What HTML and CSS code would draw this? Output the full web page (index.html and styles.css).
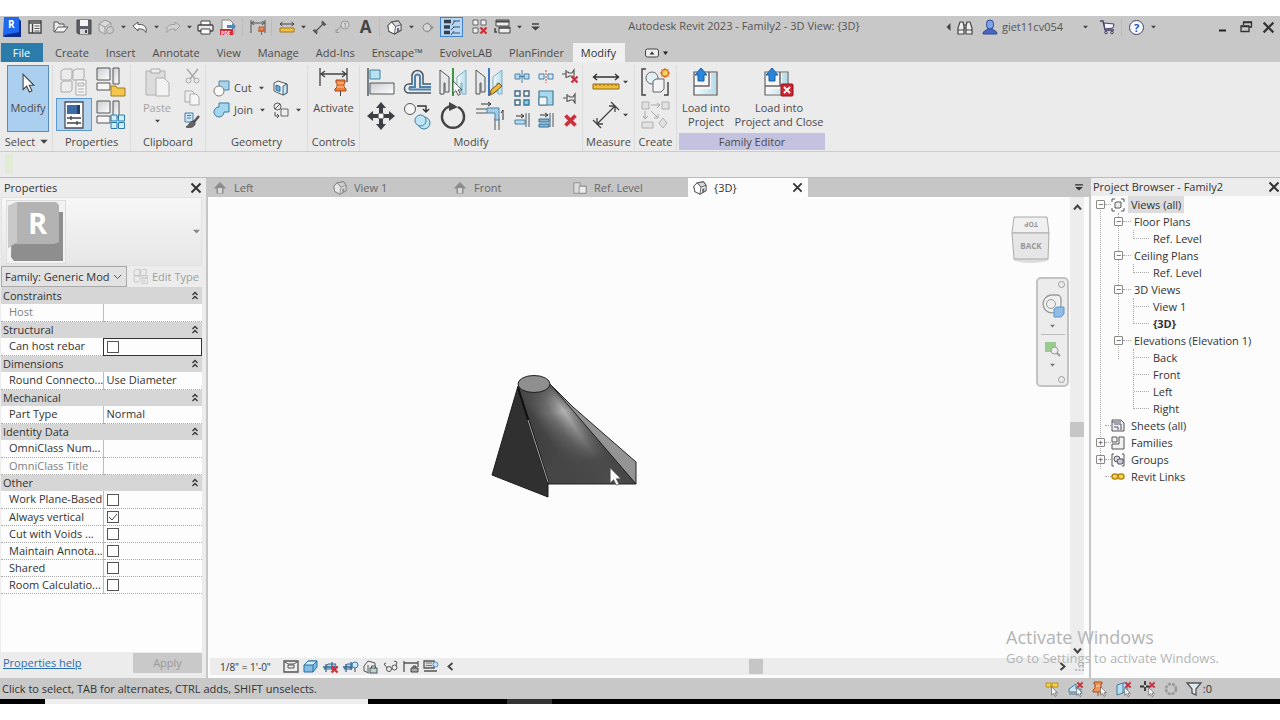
FILE: index.html
```html
<!DOCTYPE html>
<html lang="en">
<head>
<meta charset="utf-8">
<title>Autodesk Revit 2023 - Family2 - 3D View: {3D}</title>
<link rel="stylesheet" href="styles.css">
</head>
<body>
<svg class="defs" aria-hidden="true">
  <defs>
    <linearGradient id="gMetal" x1="0" y1="0" x2="1" y2="1"><stop offset="0" stop-color="#c9ccd2"/><stop offset="1" stop-color="#fff"/></linearGradient>
    <linearGradient id="gPale" x1="0" y1="0" x2="1" y2="0"><stop offset="0" stop-color="#f6fbfd"/><stop offset="1" stop-color="#b5dcea"/></linearGradient>
    <symbol id="caret" viewBox="0 0 6 4"><path d="M0 .5h6L3 3.8z" fill="#444"/></symbol>
    <symbol id="cross" viewBox="0 0 12 12"><path d="M1.500 1.500l9 9M10.500 1.500l-9 9" stroke="#333" stroke-width="2" fill="none"/></symbol>
    <symbol id="pointer" viewBox="0 0 12 18"><path d="M1 1v14l3.300-3 2.500 5.300 2.400-1.200-2.500-5H11z" fill="#fff" stroke="#444"/></symbol>
    <symbol id="house3d" viewBox="0 0 16 16"><path d="M1 6l4-4 7-1 3 4v6l-7 4-6-3z" fill="#f3f3f5" stroke="#555" stroke-width="1.200"/><path d="M1 6l4-4 4 5-1 8-6-3z" fill="#fff" stroke="#555"/><path d="M5 2l7-1 3 4-6 2z" fill="#d5d8de" stroke="#555"/><path d="M10.500 9l2.500-1v4l-2.500 1.500z" fill="#667"/></symbol>
    <symbol id="home" viewBox="0 0 14 14"><path d="M7 1L.5 7.500h3V12.500h7V7.500h3z" fill="#8d8d8d"/><rect x="5" y="7" width="4" height="5" fill="#d8d8d8"/></symbol>
    <symbol id="pane" viewBox="0 0 28 28"><path d="M1 1h13v12H1z" fill="url(#gMetal)" stroke="#555"/><path d="M17 1h6v16h-6z" fill="url(#gMetal)" stroke="#555"/><path d="M1 16h13v7H1z" fill="#f5f5f5" stroke="#555"/></symbol>
    <symbol id="types" viewBox="0 0 30 28"><g fill="#ececec" stroke="#aaa"><path d="M2 3l3-2h8v9l-2 2H2zM14 3l3-2h8v9l-2 2h-9zM2 15l3-2h8v9l-2 2H2z"/><path d="M17 12h10v15H17z" fill="#f7f7f7"/><path d="M19 15h6v3h-6zM19 21h6M19 24h6"/></g></symbol>
    <symbol id="pin" viewBox="0 0 14 12"><path d="M0 6h4M4 2v8M4 4h2l1 1h3l2-3v9l-2-3H7L6 9H4" fill="none" stroke="#555" stroke-width="1.200"/></symbol>
    <symbol id="x" viewBox="0 0 12 12"><path d="M2 2l8 8M10 2l-8 8" stroke="#c9323d" stroke-width="3" fill="none"/></symbol>
    <symbol id="chev2" viewBox="0 0 8 9"><path d="M1.500 4L4 1.500 6.500 4M1.500 8L4 5.500 6.500 8" fill="none" stroke="#333" stroke-width="1.300"/></symbol>
  </defs>
</svg>

<div class="app">
<header class="titlebar">
  <div class="qat">
    <button class="cell" aria-label="Revit"><svg width="20" height="22" viewBox="0 0 20 22"><path d="M2 1h15v20H1z" fill="#1a57d8"/><path d="M17 3l2 2v16H3l-1-3 15-2z" fill="#0b2f91"/><path d="M2 1h15v15L2 19z" fill="#1d6af0"/><text x="6" y="12" class="logo-r">R</text></svg></button>
    <button class="cell cell-wide" aria-label="Home"><svg width="14" height="14" viewBox="0 0 14 14"><path d="M1 1h12v12H1z" fill="#f4f4f4" stroke="#444" stroke-width="1.400"/><path d="M1 3h12M4.500 4v9" stroke="#444" stroke-width="1.500"/><path d="M6.500 6h5M6.500 8.500h5M6.500 11h5" stroke="#555"/></svg></button>
    <button class="cell" aria-label="Open"><svg width="16" height="14" viewBox="0 0 16 14"><path d="M1 12V2h4l1 2h5v3" fill="#eee" stroke="#555"/><path d="M1.500 12L5 7h10l-4 5z" fill="#f6f6f6" stroke="#555"/></svg></button>
    <button class="cell" aria-label="Save"><svg width="16" height="16" viewBox="0 0 16 16"><path d="M1 1h14v14H2.500L1 13.500z" fill="#5b5e66" stroke="#444"/><path d="M4 1h8v6H4z" fill="#f4f4f4"/><path d="M4 10h8v5H4z" fill="#d7d7d7"/><path d="M9 11h2v3H9z" fill="#444"/></svg></button>
    <button class="cell" aria-label="Synchronize" disabled><svg width="17" height="16" viewBox="0 0 17 16"><path d="M1 5l6-4 6 3v7l-6 4-6-3z" fill="#dadada" stroke="#999"/><path d="M1 5l6 3 6-4M7 8v7" fill="none" stroke="#999"/><circle cx="12" cy="11" r="3.500" fill="#ccc" stroke="#999"/></svg></button>
    <button class="drop" aria-label="Synchronize menu"><svg width="5" height="4"><use href="#caret"/></svg></button>
    <button class="cell" aria-label="Undo"><svg width="16" height="13" viewBox="0 0 16 13"><path d="M1 5l5-4v2.500c6-.5 9 2 8 8-1.500-3-4-4-8-3.500V10z" fill="#fafafa" stroke="#555"/></svg></button>
    <button class="drop" aria-label="Undo menu"><svg width="5" height="4"><use href="#caret"/></svg></button>
    <button class="cell" aria-label="Redo" disabled><svg width="16" height="13" viewBox="0 0 16 13"><path d="M15 5l-5-4v2.500c-6-.5-9 2-8 8 1.500-3 4-4 8-3.500V10z" fill="#d2d2d2" stroke="#a0a0a0"/></svg></button>
    <button class="drop" aria-label="Redo menu"><svg width="5" height="4"><use href="#caret"/></svg></button>
    <button class="cell" aria-label="Print"><svg width="17" height="15" viewBox="0 0 17 15"><path d="M4 5V1h9v4" fill="#fff" stroke="#444"/><rect x="1" y="5" width="15" height="6" rx="1" fill="#e9e9ee" stroke="#444" stroke-width="1.300"/><path d="M4 9h9v5H4z" fill="#fff" stroke="#444"/></svg></button>
    <button class="cell" aria-label="Export PDF"><svg width="17" height="17" viewBox="0 0 17 17"><path d="M2 1h8l4 4v10H2z" fill="#f5f5f5" stroke="#888"/><path d="M7 6h5V4l4 3.500-4 3.500V9H7z" fill="#4d86c6"/><rect y="10" width="13" height="6" fill="#d42c34"/><text x="1" y="15.500" class="pdf">PDF</text></svg></button>
    <span class="rule"></span>
    <button class="cell" aria-label="Aligned dimension"><svg width="16" height="16" viewBox="0 0 16 16"><path d="M1 1v13M15 1v13M1 4h14M4 2L1.500 4 4 6M12 2l2.500 2L12 6" fill="none" stroke="#555"/><path d="M9 8h5v4H9zM11.500 12v4M8 12h7" stroke="#c0582b" fill="#ec8b50"/></svg></button>
    <span class="rule"></span>
    <button class="cell" aria-label="Measure"><svg width="16" height="12" viewBox="0 0 16 12"><path d="M1 3h14M3.500 1L1 3l2.500 2M12.500 1L15 3l-2.500 2" fill="none" stroke="#444"/><path d="M1 7h14v4H1z" fill="#f2bf3e" stroke="#a77a1b"/></svg></button>
    <button class="drop" aria-label="Measure menu"><svg width="5" height="4"><use href="#caret"/></svg></button>
    <button class="cell" aria-label="Dimension"><svg width="15" height="15" viewBox="0 0 15 15"><path d="M3 12L12 3M1 10l4 4M10 1l4 4M3 9v3h3M9 3h3v3" fill="none" stroke="#555" stroke-width="1.200"/></svg></button>
    <button class="cell" aria-label="Tag" disabled><svg width="15" height="14" viewBox="0 0 15 14"><circle cx="10" cy="5" r="4" fill="#d8d8d8" stroke="#999"/><path d="M9 4l1.300-1v5M6 6L1 12M1 9v3.500h3" fill="none" stroke="#999"/></svg></button>
    <button class="cell glyph-a" aria-label="Text">A</button>
    <span class="rule"></span>
    <button class="cell" aria-label="Default 3D view"><svg width="15" height="15"><use href="#house3d"/></svg></button>
    <button class="drop" aria-label="3D view menu"><svg width="5" height="4"><use href="#caret"/></svg></button>
    <button class="cell" aria-label="Section"><svg width="14" height="13" viewBox="0 0 14 13"><path d="M1 6.500L6 2v9zM6 1l7 5.500L6 12" fill="#999"/><circle cx="6" cy="6.500" r="4" fill="#d5d5d5" stroke="#8b8b8b"/></svg></button>
    <button class="cell thin-on" aria-label="Thin lines" aria-pressed="true"><svg width="16" height="16" viewBox="0 0 16 16"><path d="M0 2.500h7M0 8h6M0 13.500h6" stroke="#34404e" stroke-width="3.500"/><path d="M9 2h7M9 8h7M9 14h7M8 6l3-4M7 11l3-3M7 16l3-4" stroke="#34506e" fill="none"/></svg></button>
    <button class="cell" aria-label="Close inactive views"><svg width="16" height="16" viewBox="0 0 16 16"><path d="M1 1h5v5H1zM9 1h5v5H9zM1 9h5v5H1z" fill="#f1f1f1" stroke="#666"/><svg x="7" y="7" width="9" height="9"><use href="#x"/></svg></svg></button>
    <button class="cell" aria-label="Switch windows"><svg width="17" height="16" viewBox="0 0 17 16"><path d="M2 1h13v6H2z" fill="#eee" stroke="#444"/><path d="M2 2.500h13" stroke="#444" stroke-width="2"/><path d="M5 8h11v6H5z" fill="#eee" stroke="#444"/><path d="M5 9h11M1 9v4h2" stroke="#444" stroke-width="1.500" fill="none"/></svg></button>
    <button class="drop" aria-label="Switch windows menu"><svg width="5" height="4"><use href="#caret"/></svg></button>
    <button class="cell" aria-label="Customize toolbar"><svg width="9" height="8" viewBox="0 0 9 8"><path d="M1 1h7" stroke="#444" stroke-width="1.500"/><path d="M0 3.500h9L4.500 7.500z" fill="#444"/></svg></button>
  </div>
  <h1 class="doc-title">Autodesk Revit 2023 - Family2 - 3D View: {3D}</h1>
  <div class="account">
    <button class="drop" aria-label="Collapse"><svg width="5" height="8" viewBox="0 0 5 8"><path d="M4.500 0v8L.5 4z" fill="#444"/></svg></button>
    <button class="cell" aria-label="Search"><svg width="16" height="15" viewBox="0 0 16 15"><path d="M3 2h3l1 4v8H1V8zM13 2h-3L9 6v8h6V8z" fill="#eee" stroke="#444" stroke-width="1.200"/><path d="M7 5h2M7 8h2M1 10h6M9 10h6" stroke="#444"/></svg></button>
    <button class="user"><svg width="16" height="16" viewBox="0 0 16 16"><path d="M1 15c0-3 3-4 5-4.500V9h4v1.500c2 .5 5 1.500 5 4.500z" fill="#4768c0" stroke="#2f4790"/><rect x="4.500" y="1" width="7" height="9" rx="3.500" fill="#7ea3ea" stroke="#2f4790"/></svg><span>giet11cv054</span><svg class="user-caret" width="5" height="4"><use href="#caret"/></svg></button>
    <button class="cell" aria-label="App store"><svg width="17" height="15" viewBox="0 0 17 15"><path d="M1 1h3l2 9h9" fill="none" stroke="#47426a" stroke-width="1.300"/><path d="M5 3l10 1-1 4-8 1z" fill="#f5f5ff" stroke="#47426a"/><circle cx="7" cy="12.500" r="1.300" fill="none" stroke="#47426a"/><circle cx="13" cy="12.500" r="1.300" fill="none" stroke="#47426a"/></svg></button>
    <span class="rule"></span>
    <button class="cell help" aria-label="Help"><span>?</span></button>
    <button class="drop" aria-label="Help menu"><svg width="5" height="4"><use href="#caret"/></svg></button>
  </div>
  <div class="window-controls">
    <button class="cell" aria-label="Minimize"><svg width="10" height="12" viewBox="0 0 10 12"><path d="M1 9.500h7" stroke="#222" stroke-width="2"/></svg></button>
    <button class="cell" aria-label="Restore"><svg width="12" height="12" viewBox="0 0 12 12"><path d="M3.500 4V1h8v5H9M1 5h8v5.500H1z" fill="none" stroke="#333" stroke-width="1.300"/><path d="M1 5.500h8M3.500 1.500h8" stroke="#333" stroke-width="1.500"/></svg></button>
    <button class="cell" aria-label="Close"><svg width="13" height="13"><use href="#cross"/></svg></button>
  </div>
</header>

<nav class="tabs" aria-label="Ribbon tabs">
  <button class="tab file">File</button>
  <button class="tab">Create</button>
  <button class="tab">Insert</button>
  <button class="tab">Annotate</button>
  <button class="tab">View</button>
  <button class="tab">Manage</button>
  <button class="tab">Add-Ins</button>
  <button class="tab">Enscape™</button>
  <button class="tab">EvolveLAB</button>
  <button class="tab">PlanFinder</button>
  <button class="tab current">Modify</button>
  <button class="minimize" aria-label="Minimize ribbon"><svg width="24" height="10" viewBox="0 0 24 10"><rect x=".5" y="1" width="13" height="8" rx="2" fill="#eee" stroke="#444"/><path d="M4.500 6.500h5L7 3.500z" fill="#333"/><path d="M18 3.500h5L20.500 7z" fill="#222"/></svg></button>
</nav>

<div class="ribbon">
  <section class="panel p-select">
    <div class="tools"><button class="modify"><svg width="13" height="20"><use href="#pointer"/></svg><span>Modify</span></button></div>
    <h2>Select <svg width="8" height="5"><use href="#caret"/></svg></h2>
  </section>
  <section class="panel p-props">
    <div class="tools tiles two">
      <button class="tile" aria-label="Type properties" disabled><svg width="30" height="28"><use href="#types"/></svg></button>
      <button class="tile" aria-label="Family category"><svg width="30" height="30" viewBox="0 0 30 30"><svg width="28" height="28"><use href="#pane"/></svg><path d="M15 19h5l1 2h8v8H15z" fill="#f4c74b" stroke="#a07d22"/></svg></button>
      <button class="tile on" aria-label="Properties" aria-pressed="true"><svg width="20" height="28" viewBox="0 0 20 28"><path d="M1 1h18v26H1z" fill="#fafcff" stroke="#4a4f58" stroke-width="1.300"/><path d="M3 4h10v9H3z" fill="#3f6ba5"/><path d="M13 4h3v9h-3z" fill="#26405e"/><path d="M3 17h14M3 22h14M7 15v4M13 20v4" stroke="#444" stroke-width="1.300"/></svg></button>
      <button class="tile" aria-label="Family types"><svg width="30" height="30" viewBox="0 0 30 30"><svg width="28" height="28"><use href="#pane"/></svg><path d="M15 15h6v6h-6zM22.500 15h6v6h-6zM15 22.500h6v6h-6zM22.500 22.500h6v6h-6z" fill="#cdeefc" stroke="#2d7aa8"/></svg></button>
    </div>
    <h2>Properties</h2>
  </section>
  <section class="panel p-clip">
    <div class="tools row">
      <button class="paste" disabled><svg width="26" height="30" viewBox="0 0 26 30"><path d="M2 4h19v24H2z" fill="#dcdcdc" stroke="#b0b0b0"/><path d="M7 2h9v4H7z" fill="#eee" stroke="#aaa"/><path d="M12 11h8l5 5v13H12z" fill="#f2f2f2" stroke="#b0b0b0"/></svg><span>Paste</span><svg width="5" height="4"><use href="#caret"/></svg></button>
      <div class="stack">
        <button aria-label="Cut to clipboard" disabled><svg width="15" height="16" viewBox="0 0 15 16"><path d="M2 1l8 10M13 1L5 11" stroke="#aaa" stroke-width="1.500"/><circle cx="3.500" cy="12.500" r="2.500" fill="none" stroke="#aaa"/><circle cx="11.500" cy="12.500" r="2.500" fill="none" stroke="#aaa"/></svg></button>
        <button aria-label="Copy to clipboard" disabled><svg width="16" height="16" viewBox="0 0 16 16"><path d="M1 1h7l2 2v9H1z" fill="#eee" stroke="#aaa"/><path d="M6 4h6l3 3v8H6z" fill="#f6f6f6" stroke="#aaa"/></svg></button>
        <button aria-label="Match type"><svg width="16" height="16" viewBox="0 0 16 16"><path d="M1 1h8v9H1z" fill="#cde6f3" stroke="#4b7ea5"/><path d="M3 3.500h4M3 6h4" stroke="#4b7ea5"/><path d="M15 4l-5 6" stroke="#555" stroke-width="2.500"/><path d="M10 9c-5 0-4 4-8 6 5 1 9 0 9-4z" fill="#666" stroke="#444"/></svg></button>
      </div>
    </div>
    <h2>Clipboard</h2>
  </section>
  <section class="panel p-geo">
    <div class="tools geo">
      <button><svg width="17" height="17" viewBox="0 0 17 17"><path d="M6 1h10v9H6z" fill="#a9d3e8" stroke="#4e86a8"/><circle cx="6" cy="11" r="5" fill="#fff" stroke="#8c7474"/></svg>Cut <svg class="gap-caret" width="5" height="4"><use href="#caret"/></svg></button>
      <button aria-label="Cope"><svg width="15" height="16" viewBox="0 0 15 16"><path d="M1 3l4-2 9 3v9l-4 2-9-4z" fill="#f4f6f8" stroke="#555"/><path d="M10 6l4-2v9l-4 2z" fill="#cfe6f2" stroke="#41617a"/><path d="M3 5l4 1.500v5L3 10z" fill="#6aa9d8" stroke="#2c6b9c"/></svg></button>
      <button><svg width="17" height="17" viewBox="0 0 17 17"><path d="M6 1h10v9h-5a5 5 0 1 1-5-5z" fill="#a6d6ee" stroke="#347ea6"/></svg>Join <svg class="gap-caret" width="5" height="4"><use href="#caret"/></svg></button>
      <button aria-label="Split face"><svg width="16" height="16" viewBox="0 0 16 16"><circle cx="4.500" cy="4.500" r="3.500" fill="#eee" stroke="#555"/><path d="M8 7h7v7H8z" fill="#eee" stroke="#666"/><path d="M2 7l5-5M2 10v4h4M4 12l2 2-2 2" fill="none" stroke="#555"/></svg><svg class="gap-caret" width="5" height="4"><use href="#caret"/></svg></button>
    </div>
    <h2>Geometry</h2>
  </section>
  <section class="panel p-ctl">
    <div class="tools"><button class="large"><svg width="30" height="30" viewBox="0 0 30 30"><path d="M1 1v18M28 1v14M1 7h27M6 4L2 7l4 3M23 4l4 3-4 3" fill="none" stroke="#444" stroke-width="1.300"/><path d="M17 13h9v3h-1v4l2 2v2H16v-2l2-2v-4h-1z" fill="#ef7d35" stroke="#a64c19"/><path d="M18 16h7M18 20h7" stroke="#f9d0b0"/><path d="M21.500 24v5" stroke="#444"/></svg><span>Activate</span></button></div>
    <h2>Controls</h2>
  </section>
  <section class="panel p-mod">
    <div class="tools row">
      <div class="tiles four">
        <button class="tile" aria-label="Align"><svg width="28" height="28" viewBox="0 0 28 28"><path d="M1 0v28" stroke="#4c5a66" stroke-width="1.500"/><path d="M3 2h10v9H3z" fill="#b8e2f2" stroke="#3f81a2"/><path d="M3 15h24v11H3z" fill="url(#gMetal)" stroke="#555"/></svg></button>
        <button class="tile" aria-label="Offset"><svg width="29" height="26" viewBox="0 0 29 26"><path d="M28 24H6a4.500 4.500 0 0 1 0-9h3V7a5.500 5.500 0 0 1 11 0v8h8" fill="none" stroke="#4b5560" stroke-width="1.500"/><path d="M28 20.500H7a1.500 1.500 0 0 1 0-2.500h5V8a2.500 2.500 0 0 1 5 0v10h11" fill="none" stroke="#4a82b3" stroke-width="2"/></svg></button>
        <button class="tile" aria-label="Mirror pick axis"><svg width="28" height="29" viewBox="0 0 28 29"><path d="M1 2l9 7v15H6v-9H5v11H1z" fill="#e5e7ea" stroke="#555"/><path d="M27 2l-9 7v15h4v-9h1v11h4z" fill="url(#gPale)" stroke="#7aaec5"/><path d="M14 0v28" stroke="#3b9a42" stroke-width="2"/><svg x="13" y="12" width="11" height="16"><use href="#pointer"/></svg></svg></button>
        <button class="tile" aria-label="Mirror draw axis"><svg width="28" height="29" viewBox="0 0 28 29"><path d="M1 2l9 7v15H6v-9H5v11H1z" fill="#e5e7ea" stroke="#555"/><path d="M27 2l-9 7v15h4v-9h1v11h4z" fill="url(#gPale)" stroke="#7aaec5"/><path d="M14 0v28" stroke="#3c78bd" stroke-width="2"/><path d="M15 27l1-5 8-7 3 3-8 7z" fill="#f0bc3e" stroke="#6b5325"/></svg></button>
        <button class="tile" aria-label="Move"><svg width="28" height="28" viewBox="0 0 28 28"><path d="M14 0l5 6h-3v5h-4V6H9zM14 28l5-6h-3v-5h-4v5H9zM0 14l6-5v3h5v4H6v3zM28 14l-6-5v3h-5v4h5v3z" fill="#3c4046"/><rect x="11.500" y="11.500" width="5" height="5" fill="#fff" stroke="#888"/></svg></button>
        <button class="tile" aria-label="Copy"><svg width="28" height="28" viewBox="0 0 28 28"><circle cx="7" cy="7" r="5.500" fill="#f5f5f5" stroke="#555"/><path d="M14 4h9v5M20 7l3 3 3-3" fill="none" stroke="#333" stroke-width="1.400"/><circle cx="21" cy="21" r="6" fill="#bfe5f4" stroke="#377da5"/><circle cx="17.500" cy="18.500" r="5.500" fill="#bfe5f4" stroke="#377da5"/></svg></button>
        <button class="tile" aria-label="Rotate"><svg width="28" height="28" viewBox="0 0 28 28"><path d="M19 5A11 11 0 1 1 9 5a11 11 0 0 1 6-1" fill="none" stroke="#444" stroke-width="2.500"/><path d="M10 0l9 5-9 4z" fill="#444"/></svg></button>
        <button class="tile" aria-label="Trim"><svg width="29" height="28" viewBox="0 0 29 28"><path d="M1 7h14M1 11h11M20 16v12M24 16v12" stroke="#555"/><path d="M12 6h12v12h-4v-7h-8z" fill="#a5cce4" stroke="#4b87ad"/><path d="M6 2h10M13 0l3 2-3 2M28 18V8M26 11l2-3" fill="none" stroke="#333"/></svg></button>
      </div>
      <div class="minis">
        <button aria-label="Split element"><svg width="16" height="14" viewBox="0 0 16 14"><path d="M1 5h5v5H1zM10 5h5v5h-5z" fill="#b8dbef" stroke="#4a7fa5"/><path d="M8 1v13M5 7.500h6" stroke="#4a7fa5"/></svg></button>
        <button aria-label="Split with gap"><svg width="16" height="14" viewBox="0 0 16 14"><path d="M1 5h5v5H1zM10 5h5v5h-5z" fill="#d4e9f4" stroke="#4a7fa5"/><path d="M8 1v13" stroke="#b55" stroke-dasharray="2 1"/></svg></button>
        <button aria-label="Unpin"><svg width="17" height="16" viewBox="0 0 17 16"><svg width="14" height="12"><use href="#pin"/></svg><svg x="8" y="7" width="9" height="9"><use href="#x"/></svg></svg></button>
        <button aria-label="Array"><svg width="16" height="16" viewBox="0 0 16 16"><path d="M1 1h5v5H1zM10 1h5v5h-5zM1 10h5v5H1z" fill="#eef6fa" stroke="#47677f" stroke-width="1.400"/><path d="M10 10h5v5h-5z" fill="#8ecae8" stroke="#387ba0" stroke-width="1.400"/></svg></button>
        <button aria-label="Scale"><svg width="16" height="16" viewBox="0 0 16 16"><path d="M1 1h14v14H1z" fill="#a8d8ee" stroke="#487b98" stroke-width="1.200"/><path d="M1 7h8v8H1z" fill="#f5f5f5" stroke="#487b98"/></svg></button>
        <button aria-label="Pin"><svg width="14" height="12"><use href="#pin"/></svg></button>
        <button aria-label="Trim single"><svg width="16" height="16" viewBox="0 0 16 16"><path d="M12 1v14M15 1v14" stroke="#4d5a66"/><path d="M1 8h10v4H1z" fill="#b8dbef" stroke="#4a7fa5"/><path d="M2 4h8M7 2l3 2-3 2" fill="none" stroke="#333"/></svg></button>
        <button aria-label="Trim multiple"><svg width="16" height="16" viewBox="0 0 16 16"><path d="M12 1v14M15 1v14" stroke="#4d5a66"/><path d="M1 7h10v3H1zM1 12h10v3H1z" fill="#7bb8dc" stroke="#3a6f96"/><path d="M2 3h8M7 1l3 2-3 2" fill="none" stroke="#333"/></svg></button>
        <button aria-label="Delete"><svg width="15" height="15"><use href="#x"/></svg></button>
      </div>
    </div>
    <h2>Modify</h2>
  </section>
  <section class="panel p-meas">
    <div class="tools meas">
      <button aria-label="Measure between"><svg width="28" height="18" viewBox="0 0 28 18"><path d="M1 4h26M5 1L1.500 4 5 7M23 1l3.500 3L23 7" fill="none" stroke="#333" stroke-width="1.400"/><path d="M1 11h26v5H1z" fill="#f2bd37" stroke="#8d6a1d"/><path d="M4 11v2M8 11v2M12 11v2M16 11v2M20 11v2M24 11v2" stroke="#8d6a1d"/></svg><svg class="gap-caret" width="5" height="4"><use href="#caret"/></svg></button>
      <button aria-label="Aligned dimension"><svg width="28" height="28" viewBox="0 0 28 28"><path d="M5 23L23 5M1 19l8 8M19 1l8 8M5 17v6h6M17 5h6v6" fill="none" stroke="#444" stroke-width="1.300"/></svg><svg class="gap-caret" width="5" height="4"><use href="#caret"/></svg></button>
    </div>
    <h2>Measure</h2>
  </section>
  <section class="panel p-create">
    <div class="tools tiles one">
      <button class="tile" aria-label="Create group"><svg width="29" height="28" viewBox="0 0 29 28"><path d="M5 1H1v26h4M23 27h4V14" fill="none" stroke="#444" stroke-width="1.400"/><circle cx="11" cy="10" r="6" fill="#e2eff5" stroke="#666"/><path d="M12 13l3-2h8v10l-3 3h-8z" fill="#f2f2f5" stroke="#666"/><circle cx="24" cy="5" r="3.500" fill="#f7c64a" stroke="#dd6b23" stroke-width="1.500"/><path d="M24 0v10M19 5h10M20.500 1.500l7 7M27.500 1.500l-7 7" stroke="#dd6b23"/><circle cx="24" cy="5" r="2.500" fill="#f9d562"/></svg></button>
      <button class="tile" aria-label="Create similar" disabled><svg width="29" height="28" viewBox="0 0 29 28"><path d="M1 1h7v7H1zM21 1h7v7h-7zM1 21h11v6H1zM22 17l4 5-4 5-4-5z" fill="#e2e2e2" stroke="#b0b0b0"/><path d="M10 4h9M16 2l3 2-3 3M4 10v8M2 15l2 3 3-3M10 10l7 7M17 13v4h-4" fill="none" stroke="#aaa"/></svg></button>
    </div>
    <h2>Create</h2>
  </section>
  <section class="panel p-family">
    <div class="tools row">
      <button class="large load"><svg width="30" height="30" viewBox="0 0 30 30"><path d="M3 5h23v23H3z" fill="#f6f6f7" stroke="#555" stroke-width="1.200"/><path d="M18 5v14H3" fill="none" stroke="#666" stroke-width="1.500"/><path d="M20 6h5v21H4v-5h16z" fill="url(#gPale)"/><path d="M10 1l6 7h-3v6H7V8H4z" fill="#2a86dc" stroke="#1b5e9c"/></svg><span>Load into<br>Project</span></button>
      <button class="large load-close"><svg width="30" height="30" viewBox="0 0 30 30"><path d="M1 5h23v23H1z" fill="#f6f6f7" stroke="#666" stroke-width="1.200"/><path d="M16 5v14H1" fill="none" stroke="#666" stroke-width="1.500"/><path d="M18 6h5v21H2v-5h16z" fill="url(#gPale)"/><path d="M8 1l6 7h-3v6H5V8H2z" fill="#2a86dc" stroke="#1b5e9c"/><rect x="17" y="17" width="12" height="12" rx="1" fill="#d12631" stroke="#8a1118"/><path d="M20 20l6 6M26 20l-6 6" stroke="#fff" stroke-width="1.800"/></svg><span>Load into<br>Project and Close</span></button>
    </div>
    <h2>Family Editor</h2>
  </section>
</div>
<div class="options"><span></span></div>

<main class="workspace">
  <aside class="properties">
    <div class="pane-head"><h2>Properties</h2><button aria-label="Close properties"><svg width="12" height="12"><use href="#cross"/></svg></button></div>
    <div class="preview">
      <svg width="60" height="64" viewBox="0 0 60 64"><rect x=".5" y=".5" width="59" height="63" fill="#f2f2f2" stroke="#ddd"/><path d="M6 12h51v49H8l-3-4z" fill="#8e8e8e"/><path d="M2 6l9-4h39l3 3v37l-5 2H9l-7 4z" fill="#b3b3b3"/><path d="M2 6l9-4v40l-9 5z" fill="#c9c9c9"/><text x="22" y="34" class="big-r">R</text></svg>
      <svg width="7" height="5"><use href="#caret"/></svg>
    </div>
    <div class="type-row">
      <select aria-label="Family type"><option>Family: Generic Models</option></select>
      <button class="edit-type" disabled><svg width="16" height="15"><use href="#types"/></svg>Edit Type</button>
    </div>
    <div class="prop-scroll">
    <table class="props">
      <colgroup><col class="c-name"><col></colgroup>
      <tr class="group"><th colspan="2"><span>Constraints<svg width="8" height="9"><use href="#chev2"/></svg></span></th></tr>
      <tr class="dim"><th>Host</th><td></td></tr>
      <tr class="group"><th colspan="2"><span>Structural<svg width="8" height="9"><use href="#chev2"/></svg></span></th></tr>
      <tr class="active"><th><label for="rebar">Can host rebar</label></th><td><input type="checkbox" id="rebar"></td></tr>
      <tr class="group"><th colspan="2"><span>Dimensions<svg width="8" height="9"><use href="#chev2"/></svg></span></th></tr>
      <tr><th>Round Connecto...</th><td>Use Diameter</td></tr>
      <tr class="group"><th colspan="2"><span>Mechanical<svg width="8" height="9"><use href="#chev2"/></svg></span></th></tr>
      <tr><th>Part Type</th><td>Normal</td></tr>
      <tr class="group"><th colspan="2"><span>Identity Data<svg width="8" height="9"><use href="#chev2"/></svg></span></th></tr>
      <tr><th>OmniClass Num...</th><td></td></tr>
      <tr class="dim"><th>OmniClass Title</th><td></td></tr>
      <tr class="group"><th colspan="2"><span>Other<svg width="8" height="9"><use href="#chev2"/></svg></span></th></tr>
      <tr><th><label for="wpb">Work Plane-Based</label></th><td><input type="checkbox" id="wpb"></td></tr>
      <tr><th><label for="av">Always vertical</label></th><td><input type="checkbox" id="av" checked></td></tr>
      <tr><th><label for="cv">Cut with Voids ...</label></th><td><input type="checkbox" id="cv"></td></tr>
      <tr><th><label for="ma">Maintain Annota...</label></th><td><input type="checkbox" id="ma"></td></tr>
      <tr><th><label for="sh">Shared</label></th><td><input type="checkbox" id="sh"></td></tr>
      <tr><th><label for="rc">Room Calculatio...</label></th><td><input type="checkbox" id="rc"></td></tr>
    </table>
    </div>
    <div class="prop-foot"><a href="#help">Properties help</a><button disabled>Apply</button></div>
  </aside>

  <section class="view">
    <div class="view-tabs">
      <button class="vtab"><svg width="14" height="14"><use href="#home"/></svg><span>Left</span></button>
      <button class="vtab"><svg class="faded" width="14" height="14"><use href="#house3d"/></svg><span>View 1</span></button>
      <button class="vtab"><svg width="14" height="14"><use href="#home"/></svg><span>Front</span></button>
      <button class="vtab"><svg width="14" height="14" viewBox="0 0 16 14"><path d="M1 1h7v4h7v8H1z" fill="#ddd" stroke="#888"/><path d="M7 5h8v8H7z" fill="#ececec" stroke="#888"/></svg><span>Ref. Level</span></button>
      <button class="vtab current"><svg width="14" height="14"><use href="#house3d"/></svg><span>{3D}</span><svg class="vclose" width="11" height="11"><use href="#cross"/></svg></button>
      <button class="vmenu" aria-label="View list"><svg width="8" height="7" viewBox="0 0 9 8"><path d="M0 1h9" stroke="#333" stroke-width="1.500"/><path d="M0 3.500h9L4.500 7.500z" fill="#333"/></svg></button>
    </div>
    <div class="stage">
      <div class="canvas">
        <svg class="model" width="152" height="130" viewBox="0 0 152 130" role="img" aria-label="Blend form">
          <defs><linearGradient id="gCone" gradientUnits="userSpaceOnUse" x1="34" y1="76" x2="104" y2="30"><stop offset="0" stop-color="#303030"/><stop offset=".3" stop-color="#444"/><stop offset=".5" stop-color="#777"/><stop offset=".64" stop-color="#b5b5b5"/><stop offset=".8" stop-color="#5a5a5a"/><stop offset="1" stop-color="#2e2e2e"/></linearGradient>
          <linearGradient id="gFade" gradientUnits="userSpaceOnUse" x1="58" y1="12" x2="74" y2="108"><stop offset="0" stop-color="#444" stop-opacity=".9"/><stop offset=".3" stop-color="#444" stop-opacity="0"/><stop offset=".85" stop-color="#464646" stop-opacity=".95"/></linearGradient></defs>
          <path d="M62 14l21 21 63 55v22L104 70z" fill="#949494" stroke="#222"/>
          <path d="M28 14l32-2 86 100H58z" fill="url(#gCone)"/><path d="M28 14l32-2 86 100H58z" fill="url(#gFade)"/>
          <path d="M60 12l86 100H58" fill="none" stroke="#222"/>
          <path d="M28 14L2 103l56 22V108z" fill="#303030" stroke="#1c1c1c"/>
          <path d="M28 16l30 94" stroke="#111" stroke-width="2"/><path d="M38 48l20 62" stroke="#aaa"/>
          <ellipse cx="44" cy="12" rx="16" ry="8.500" fill="#8f8f8f" stroke="#222"/>
        </svg>
        <svg class="cursor" width="13" height="19" viewBox="0 0 12 18"><path d="M1 1v14l3.300-3 2.500 5.300 2.400-1.200-2.500-5H11z" fill="#fff" stroke="#555" stroke-width=".6"/></svg>
        <svg class="cube" width="44" height="52" viewBox="0 0 44 52"><ellipse cx="22" cy="44" rx="18" ry="4" fill="#ddd"/><path d="M5 2h33l2 16H3z" fill="#f0f0f0" stroke="#aaa"/><path d="M3 18h37l-1 26H5z" fill="#e6e6e6" stroke="#aaa"/><text x="22" y="34" text-anchor="middle" class="cube-t">BACK</text><text x="-22" y="-7" transform="rotate(180)" text-anchor="middle" class="cube-t small">TOP</text></svg>
        <div class="navbar">
          <span class="dot"></span>
          <button aria-label="Steering wheel"><svg width="24" height="24" viewBox="0 0 24 24"><path d="M10 1h6a4 4 0 0 1 4 4v6a9 9 0 1 1-10-10z" fill="#f0f0f0" stroke="#999" stroke-width="1.300"/><circle cx="10" cy="10" r="4.500" fill="#eee" stroke="#999"/><path d="M13 15l3-2h7v7l-3 3h-7z" fill="#8fbde8" stroke="#5f97c9"/></svg></button>
          <svg width="5" height="4"><use href="#caret"/></svg>
          <hr>
          <button aria-label="Zoom"><svg width="16" height="16" viewBox="0 0 16 16"><path d="M0 1h11v10H0z" fill="#9acb8e"/><circle cx="9.500" cy="9.500" r="3.500" fill="#eee" stroke="#999"/><path d="M12 12l3 3" stroke="#999" stroke-width="2"/></svg></button>
          <svg width="5" height="4"><use href="#caret"/></svg>
          <span class="dot last"></span>
        </div>
      </div>
      <div class="vscroll">
        <svg width="9" height="7" viewBox="0 0 9 7"><path d="M1 5.500l3.500-4 3.500 4" fill="none" stroke="#444" stroke-width="2"/></svg>
        <span class="thumb"></span>
        <svg width="9" height="7" viewBox="0 0 9 7"><path d="M1 1.500l3.500 4 3.500-4" fill="none" stroke="#444" stroke-width="2"/></svg>
      </div>
    </div>
    <div class="view-bar">
      <button class="scale">1/8" = 1'-0"</button>
      <button aria-label="Detail level"><svg width="16" height="13" viewBox="0 0 16 13"><path d="M1 1h14v11H1z" fill="#eee" stroke="#555" stroke-width="1.300"/><path d="M2 2l3 2h6l3-2M5 5h6v3H5z" fill="none" stroke="#555"/></svg></button>
      <button aria-label="Visual style"><svg width="15" height="13" viewBox="0 0 15 13"><path d="M1 5l4-4h9v6l-4 5H1z" fill="#7dbfe8" stroke="#2f6f9e"/><path d="M1 5l4-4h9l-4 4z" fill="#d3ecfa" stroke="#2f6f9e"/><path d="M10 5v7" stroke="#2f6f9e"/></svg></button>
      <button aria-label="Crop view"><svg width="16" height="14" viewBox="0 0 16 14"><path d="M1 9l4-5h8l-3 5z" fill="#b9d8ee" stroke="#3c6a94"/><path d="M0 7h15M3 4v8M9 2v8" stroke="#3c6a94" stroke-width="1.300"/><svg x="7" y="5" width="9" height="9"><use href="#x"/></svg></svg></button>
      <button aria-label="Show crop region"><svg width="16" height="14" viewBox="0 0 16 14"><path d="M1 9l3-5h5v5z" fill="#b9d8ee" stroke="#3c6a94"/><path d="M0 7h9M3 4v8M8 2v8" stroke="#3c6a94" stroke-width="1.300"/><circle cx="12" cy="5" r="3" fill="#cfe7f7" stroke="#3c7bb0"/><path d="M12 8v4" stroke="#444"/></svg></button>
      <button aria-label="Lock view"><svg width="15" height="14" viewBox="0 0 15 14"><path d="M1 6l4-5 7 2v3M1 6v5l5 2M5 5v7" fill="none" stroke="#555"/><rect x="7" y="8" width="7" height="5" fill="#bdd3c8" stroke="#456"/><path d="M8.500 8V6h4v2" fill="none" stroke="#456"/></svg></button>
      <button aria-label="Temporary hide"><svg width="16" height="12" viewBox="0 0 16 12"><path d="M4 7L1 3l2-1M13 5l1-4-3-1" fill="none" stroke="#555"/><circle cx="6" cy="8" r="2.500" fill="none" stroke="#555"/><circle cx="11.500" cy="6.500" r="2.500" fill="none" stroke="#555"/></svg></button>
      <button aria-label="Reveal constraints"><svg width="16" height="13" viewBox="0 0 16 13"><path d="M1 1v11M15 1v6M1 3h14" stroke="#555" stroke-width="1.300"/><path d="M8 8h7v4H8zM10 8V6h3v2" fill="#aaa" stroke="#444"/></svg></button>
      <button aria-label="Preview visibility"><svg width="16" height="13" viewBox="0 0 16 13"><path d="M1 1h10v7H1zM1 11h13" fill="#ddd" stroke="#555" stroke-width="1.300"/><path d="M3 3h6M3 5.500h6" stroke="#777"/><circle cx="12.500" cy="4.500" r="2.500" fill="#cbe3f6" stroke="#5d8fbd"/></svg></button>
      <button aria-label="Scroll left"><svg width="7" height="9" viewBox="0 0 7 9"><path d="M5.500 1l-4 3.500 4 3.500" fill="none" stroke="#444" stroke-width="1.800"/></svg></button>
      <div class="htrack"><span class="thumb"></span></div>
      <button aria-label="Scroll right"><svg width="7" height="9" viewBox="0 0 7 9"><path d="M1.500 1l4 3.500-4 3.500" fill="none" stroke="#444" stroke-width="2"/></svg></button>
      <svg class="grip" width="9" height="9" viewBox="0 0 9 9"><path d="M7 0h2v2H7zM3.500 3.500h2v2h-2zM7 3.500h2v2H7zM0 7h2v2H0zM3.500 7h2v2h-2zM7 7h2v2H7z" fill="#bbb"/></svg>
    </div>
  </section>

  <aside class="browser">
    <div class="pane-head"><h2>Project Browser - Family2</h2><button aria-label="Close browser"><svg width="12" height="12"><use href="#cross"/></svg></button></div>
    <ul class="tree">
      <li><div class="node"><button class="box" aria-label="Collapse">−</button><i></i><svg width="14" height="14" viewBox="0 0 14 14"><path d="M1 4V1h3M10 1h3v3M13 10v3h-3M4 13H1v-3" fill="none" stroke="#555"/><path d="M4 5l1-1h5v5l-1 1H4z" fill="#eee" stroke="#555"/></svg><span class="picked">Views (all)</span></div>
        <ul>
          <li><div class="node"><button class="box" aria-label="Collapse">−</button><i></i><span>Floor Plans</span></div><ul><li>Ref. Level</li></ul></li>
          <li><div class="node"><button class="box" aria-label="Collapse">−</button><i></i><span>Ceiling Plans</span></div><ul><li>Ref. Level</li></ul></li>
          <li><div class="node"><button class="box" aria-label="Collapse">−</button><i></i><span>3D Views</span></div><ul><li>View 1</li><li><b>{3D}</b></li></ul></li>
          <li><div class="node"><button class="box" aria-label="Collapse">−</button><i></i><span>Elevations (Elevation 1)</span></div><ul><li>Back</li><li>Front</li><li>Left</li><li>Right</li></ul></li>
        </ul>
      </li>
      <li><div class="node"><span class="stem"></span><i></i><svg width="14" height="13" viewBox="0 0 14 13"><path d="M1 1h9l3 3v8H1z" fill="#eee" stroke="#555"/><path d="M1 3h9M3 5h7v6M3 8h4v3" fill="none" stroke="#557"/></svg><span>Sheets (all)</span></div></li>
      <li><div class="node"><button class="box" aria-label="Expand">+</button><i></i><svg width="14" height="14" viewBox="0 0 14 14"><path d="M1 1h5v5H1zM8 1h5v12H1V8h7z" fill="#f2f2f2" stroke="#555"/></svg><span>Families</span></div></li>
      <li><div class="node"><button class="box" aria-label="Expand">+</button><i></i><svg width="14" height="14" viewBox="0 0 14 14"><path d="M3 1H1v12h2M11 1h2v12h-2" fill="none" stroke="#555"/><circle cx="6" cy="6" r="3" fill="#d7dce5" stroke="#555"/><path d="M6 7l2-1h4v4l-1 1H7z" fill="#ccd" stroke="#555"/></svg><span>Groups</span></div></li>
      <li><div class="node"><span class="stem"></span><i></i><svg width="14" height="9" viewBox="0 0 14 9"><rect x="1" y="2" width="6" height="5" rx="2.500" fill="#f7d358" stroke="#b58a12" stroke-width="1.500"/><rect x="7" y="2" width="6" height="5" rx="2.500" fill="#f7d358" stroke="#b58a12" stroke-width="1.500"/></svg><span>Revit Links</span></div></li>
    </ul>
  </aside>
  <div class="watermark"><strong>Activate Windows</strong><span>Go to Settings to activate Windows.</span></div>
</main>

<footer class="status">
  <p>Click to select, TAB for alternates, CTRL adds, SHIFT unselects.</p>
  <div class="status-tools">
    <button aria-label="Select links"><svg width="16" height="16" viewBox="0 0 16 16"><path d="M2 2h5v4H2zM8 2h6v4H8z" fill="#f5cf4d" stroke="#b8901c"/><svg x="7" y="5" width="7" height="11"><use href="#pointer"/></svg></svg></button>
    <button aria-label="Select underlay"><svg width="16" height="16" viewBox="0 0 16 16"><path d="M1 8l7-5v5h5v3H1zM1 13h12" fill="#cfe7f5" stroke="#3f78a0"/><svg x="8" y="0" width="8" height="8"><use href="#x"/></svg><svg x="8" y="6" width="7" height="10"><use href="#pointer"/></svg></svg></button>
    <button aria-label="Select pinned"><svg width="16" height="16" viewBox="0 0 16 16"><path d="M2 1h8v2H9v4l2 2v2H1V9l2-2V3H2zM6 11v4" fill="#ef9356" stroke="#a4501d"/><path d="M4 5h4" stroke="#fbe0cc"/><svg x="8" y="5" width="7" height="11"><use href="#pointer"/></svg></svg></button>
    <button aria-label="Select by face"><svg width="16" height="16" viewBox="0 0 16 16"><path d="M1 4l6-2v10l-6 2zM7 2h4v9H7" fill="#b8dff2" stroke="#3f78a0"/><svg x="8" y="0" width="8" height="8"><use href="#x"/></svg><svg x="8" y="6" width="7" height="10"><use href="#pointer"/></svg></svg></button>
    <button aria-label="Drag on selection"><svg width="16" height="16" viewBox="0 0 16 16"><path d="M5 0v11M0 5.500h10" stroke="#333" stroke-width="1.800" stroke-dasharray="4 2"/><svg x="8" y="0" width="8" height="8"><use href="#x"/></svg><svg x="8" y="6" width="7" height="10"><use href="#pointer"/></svg></svg></button>
    <button aria-label="Background processes"><svg width="14" height="14" viewBox="0 0 14 14"><circle cx="7" cy="7" r="5" fill="none" stroke="#999" stroke-width="2.500" stroke-dasharray="3 1"/></svg></button>
    <button class="filter"><svg width="16" height="14" viewBox="0 0 16 14"><path d="M1 1h14l-5 6v6l-4-2V7z" fill="#dfe9f1" stroke="#555" stroke-width="1.300"/></svg>:0</button>
  </div>
</footer>
<div class="taskbar"></div>
</div>
</body>
</html>
```
FILE: styles.css
```css
* { box-sizing: border-box; }
body {
  margin: 0;
  min-height: 100vh;
  display: flex;
  background: #fff;
  color: #333;
  font: 11px/16px "Open Sans", "Noto Sans", sans-serif;
}
h1, h2, p, ul { margin: 0; padding: 0; font-size: inherit; font-weight: normal; }
ul { list-style: none; }
svg { flex: none; display: block; overflow: visible; }
button {
  display: flex;
  align-items: center;
  justify-content: center;
  padding: 0;
  border: 0;
  background: none;
  color: inherit;
  font: inherit;
  white-space: nowrap;
}
.defs { position: absolute; width: 0; height: 0; }
.app { flex: 1; min-width: 0; display: flex; flex-direction: column; padding: 16px 0; }

/* title bar */
.titlebar { display: flex; align-items: center; height: 27px; padding-bottom: 5px; background: #c8c8c8; }
.titlebar > div { display: flex; align-items: center; height: 22px; }
.cell { width: 23px; height: 20px; }
.cell-wide { margin-right: 3px; }
.drop { width: 10px; height: 20px; }
.rule { width: 2px; height: 18px; margin: 0 2px; border-left: 1px solid #bbb; }
.glyph-a { font-size: 17px; font-weight: bold; color: #444; }
.thin-on { border: 1px solid #3f82c8; background: #b8d6f0; margin: 0 5px 0 1px; }
.logo-r { font: bold 10px "Open Sans", sans-serif; fill: #fff; }
.pdf { font: bold 5px "Open Sans", sans-serif; fill: #fff; }
.doc-title { flex: 1; padding: 0 3px 2px 0; text-align: center; color: #555; white-space: nowrap; }
.user { gap: 4px; color: #555; padding-left: 5px; }
.user-caret { margin: 0 8px 0 16px; }
.help span { width: 15px; height: 15px; border: 1px solid #446; border-radius: 50%; background: #f5f8ff; color: #2c55b8; font-weight: bold; line-height: 13px; }
.window-controls { margin-left: 53px; }

/* ribbon tabs */
.tabs { display: flex; height: 19px; background: #c8c8c8; color: #4c4c4c; }
.tab { padding: 0 9px 0 8px; }
.file { width: 42px; margin: 0 4px 0 1px; background: #2b7cab; color: #fff; }
.current.tab { width: 52px; background: #f0f0f0; color: #333; }
.minimize { margin-left: 20px; }

/* ribbon */
.ribbon { display: flex; min-height: 90px; padding-top: 3px; background: #ebebeb; border-bottom: 1px solid #ccc; color: #4a4a4a; }
.panel { display: flex; flex-direction: column; border-right: 1px solid #dcdcdc; }
.panel h2 { display: flex; justify-content: center; align-items: center; gap: 5px; height: 17px; margin-bottom: 1px; }
.tools { flex: 1; }
.row { display: flex; }
.p-select { width: 53px; padding-left: 1px; }
.p-props { width: 78px; }
.p-clip { width: 75px; }
.p-geo { width: 102px; }
.p-ctl { width: 52px; }
.p-mod { width: 223px; }
.p-meas { width: 52px; }
.p-create { width: 42px; }
.p-family { border: 0; margin-left: 2px; }
.p-family h2 { background: #c3c2e0; }
.modify { flex-direction: column; justify-content: flex-start; gap: 7px; width: 42px; height: 67px; margin-left: 6px; padding-top: 7px; border: 1px solid #5b8cb8; background: #abcfee; }
.tiles { display: grid; place-content: start center; }
.tile { width: 36px; height: 33px; }
.two { grid-template-columns: 37px 37px; padding-left: 3px; }
.tile.on { border: 1px solid #5b9bd0; background: #b3d3ee; }
.one { grid-template-columns: 36px; }
.four { grid-template-columns: repeat(4, 36px); margin-left: 3px; }
.four .tile { height: 34px; }
.minis { display: grid; grid-template-columns: repeat(3, 24px); grid-auto-rows: 22px; margin-left: 3px; }
.paste { flex-direction: column; justify-content: flex-start; width: 52px; padding-top: 2px; gap: 4px; color: #a3a3a3; }
.paste span { line-height: 14px; }
.stack { display: grid; grid-auto-rows: 22px; padding-left: 1px; }
.geo { display: grid; grid-template-columns: 60px 30px; grid-auto-rows: 22px; padding: 12px 0 0 7px; }
.geo button { justify-content: flex-start; gap: 4px; }
.gap-caret { margin-left: 3px; }
.large { flex-direction: column; justify-content: flex-start; padding-top: 2px; gap: 4px; line-height: 14px; width: 100%; }
.large.load { width: 54px; }
.large.load-close { width: 92px; }
.meas { display: grid; grid-template-rows: 33px 34px; padding-left: 2px; }
.options { height: 26px; background: #ebebeb; border-bottom: 1px solid #bbb; padding: 2px 5px; }
.options span { display: block; width: 8px; height: 20px; background: #e1ecd6; }

/* workspace */
.workspace { position: relative; flex: 1; display: flex; min-height: 500px; }
.pane-head { display: flex; align-items: center; justify-content: space-between; height: 19px; padding: 0 0 0 3px; background: #ececec; }
.properties { width: 208px; display: flex; flex-direction: column; padding: 0 4px 0 1px; background: #ececec; border-right: 2px solid #c6c6c6; }
.preview { display: flex; align-items: center; justify-content: space-between; height: 69px; padding: 0 1px 0 4px; background: linear-gradient(#f7f7f7, #e6e6e6); border: 1px solid #e2e2e2; }
.preview > svg:last-child { opacity: .6; }
.big-r { font: bold 29px "Open Sans", sans-serif; fill: #fff; }
.type-row { display: flex; gap: 6px; height: 21px; align-items: center; }
.type-row select {
  appearance: none;
  width: 126px;
  height: 21px;
  padding: 0 16px 0 3px;
  border: 1px solid #aaa;
  border-radius: 0;
  color: #333;
  font: inherit;
  background: #e2e2e2 url("data:image/svg+xml,%3Csvg xmlns='http://www.w3.org/2000/svg' width='9' height='6'%3E%3Cpath d='M1 1l3.500 3.500L8 1' fill='none' stroke='%23555'/%3E%3C/svg%3E") no-repeat right 4px center;
}
.edit-type { gap: 3px; color: #a0a0a0; }
.prop-scroll { flex: 1; background: #fdfdfd; }
.props { width: 100%; table-layout: fixed; border-collapse: collapse; line-height: 15px; }
.c-name { width: 102px; }
.props tr { height: 17px; }
.props th, .props td { padding: 0 0 1px; height: 17px; font-weight: normal; text-align: left; white-space: nowrap; overflow: hidden; border-bottom: 1px dotted #aaa; }
.props th { padding-left: 8px; }
.props td { padding-left: 3px; border-left: 1px solid #bbb; }
.props .group th { padding-left: 2px; background: #d6d6d6; border-bottom: 0; }
.group span { display: flex; align-items: center; justify-content: space-between; padding-right: 3px; }
.dim th { color: #808080; }
.props .active td { border: 1px solid #333; }
.props input {
  appearance: none;
  display: block;
  width: 12px;
  height: 12px;
  margin: 2px 0 0;
  border: 1px solid #555;
  background: #fff;
}
.props input:checked { background: #fff url("data:image/svg+xml,%3Csvg xmlns='http://www.w3.org/2000/svg' width='10' height='10'%3E%3Cpath d='M1 5l3 3 5-6' fill='none' stroke='%23444'/%3E%3C/svg%3E") no-repeat center; }
.prop-foot { display: flex; align-items: center; justify-content: space-between; padding: 1px 0 5px 2px; }
.prop-foot a { color: #2a6cb0; }
.prop-foot button { width: 69px; height: 20px; background: #c9c9c9; color: #999; }

/* 3D view */
.view { flex: 1; min-width: 0; display: flex; flex-direction: column; background: #fcfcfc; }
.view-tabs { display: flex; height: 19px; background: #c6c6c6; color: #666; }
.vtab { width: 120px; justify-content: flex-start; padding-left: 5px; gap: 7px; }
.vtab.current { background: #fcfcfc; color: #333; padding-right: 5px; }
.vclose { margin-left: auto; }
.faded { opacity: .55; }
.vmenu { width: 20px; margin-left: auto; }
.stage { flex: 1; display: flex; }
.canvas { position: relative; flex: 1; }
.model { position: absolute; left: 282px; top: 175px; }
.cursor { position: absolute; left: 401px; top: 270px; }
.cube { position: absolute; right: 17px; top: 18px; }
.cube-t { font: bold 8px "Open Sans", sans-serif; fill: #999; }
.cube-t.small { font-size: 7px; }
.navbar { position: absolute; right: 1px; top: 80px; width: 33px; height: 110px; display: flex; flex-direction: column; align-items: center; gap: 6px; padding: 2px; border: 2px solid #c2c2c2; border-radius: 5px; background: #ececec; }
.navbar > svg { opacity: .7; }
.navbar hr { width: 24px; margin: 0; border: 0; border-top: 1px solid #bbb; }
.dot { width: 7px; height: 7px; border: 1px solid #999; border-radius: 50%; align-self: flex-end; }
.dot.last { margin-top: auto; }
.vscroll { width: 14px; margin-right: 5px; display: flex; flex-direction: column; align-items: center; justify-content: space-between; padding: 7px 0 4px; background: #ededed; }
.thumb { display: block; width: 14px; height: 15px; background: #c6c6c6; }
.view-bar { display: flex; align-items: center; height: 17px; margin: 0 5px 3px 2px; padding-left: 10px; background: #ececec; }
.view-bar button { min-width: 20px; }
.view-bar .scale { margin-right: 10px; font-size: 10px; }
.htrack { flex: 1; display: flex; justify-content: center; }
.grip { margin-left: 3px; }

/* project browser */
.browser { width: 191px; background: #fcfcfc; border-left: 2px solid #c6c6c6; }
.browser .pane-head { height: 18px; padding-left: 2px; }
.tree { position: relative; padding: 0 0 0 5px; line-height: 17px; }
.tree::before { content: ""; position: absolute; left: 9px; top: 9px; height: 264px; border-left: 1px dotted #aaa; }
.node { display: flex; align-items: center; height: 17px; }
.node i { width: 6px; border-top: 1px dotted #aaa; }
.node svg { margin: 0 3px 0 0; }
.node span:last-child { padding: 0 3px; }
.box { position: relative; width: 9px; height: 9px; border: 1px solid #888; border-radius: 1px; background: #fff; line-height: 7px; font-size: 9px; }
.stem { width: 9px; }
.picked { background: #dcdcdc; }
.tree ul { position: relative; padding-left: 18px; }
.tree ul::before { content: ""; position: absolute; left: 22px; top: 0; height: 146px; border-left: 1px dotted #aaa; }
.tree ul i { width: 8px; }
.tree ul ul { padding-left: 19px; }
.tree ul ul::before { left: 19px; height: auto; bottom: 8px; }
.tree ul ul li { padding-left: 20px; height: 17px; }
.tree ul ul li::before { content: ""; float: left; width: 15px; margin: 8px 0 0 -19px; border-top: 1px dotted #aaa; }

.watermark { position: absolute; right: 53px; bottom: 11px; display: flex; flex-direction: column; width: 221px; color: #b4b4b4; pointer-events: none; font-size: 13px; line-height: 18px; white-space: nowrap; }
.watermark strong { font-size: 18px; font-weight: normal; line-height: 24px; }

/* status bar */
.status { display: flex; align-items: center; justify-content: space-between; height: 21px; padding: 0 68px 0 2px; background: #c8c8c8; }
.status-tools { display: flex; gap: 8px; }
.filter { gap: 1px; }
.taskbar { height: 5px; background: linear-gradient(to right, #000 45px, #eee 45px 368px, #000 368px 507px, #333 507px 552px, #000 552px); }
```
